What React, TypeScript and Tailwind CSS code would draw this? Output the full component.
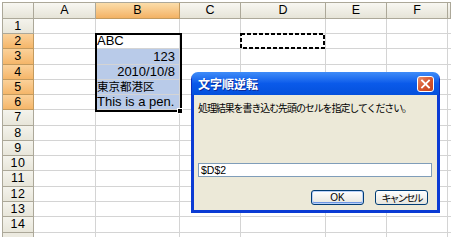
import React from "react";

const cols = ["", "A", "B", "C", "D", "E", "F", ""];
const rowCount = 16; // header + 14 rows + partial

const cellText: Record<string, { t: string; align: "l" | "r"; cjk?: boolean }> = {
  "2-2": { t: "ABC", align: "l" },
  "3-2": { t: "123", align: "r" },
  "4-2": { t: "2010/10/8", align: "r" },
  "5-2": { t: "東京都港区", align: "l", cjk: true },
  "6-2": { t: "This is a pen.", align: "l" },
};

function Cell({ r, c }: { r: number; c: number }) {
  if (r === 0) {
    if (c === 0) {
      return <div className="border-r border-b border-[#ACA899] bg-gradient-to-b from-[#F8F7F2] to-[#E6E4D8]" />;
    }
    if (c === 2) {
      return (
        <div className="flex items-center justify-center border-r border-b border-[#C39A5E] bg-gradient-to-b from-[#FBDDA9] to-[#F3B264] text-[12.5px] leading-none text-black">
          {cols[c]}
        </div>
      );
    }
    return (
      <div className="flex items-center justify-center border-r border-b border-[#ACA899] bg-gradient-to-b from-[#F8F7F2] to-[#E6E4D8] text-[12.5px] leading-none text-black">
        {cols[c]}
      </div>
    );
  }
  if (c === 0) {
    const sel = r >= 2 && r <= 6;
    if (r === 15) {
      return <div className="border-r border-[#ACA899] bg-[#ECEAE0]" />;
    }
    if (sel) {
      return (
        <div className="flex items-center justify-center border-r border-b border-[#C39A5E] bg-gradient-to-b from-[#FBD199] to-[#F5B669] text-[12.5px] leading-none tracking-[0.5px] text-black">
          {r}
        </div>
      );
    }
    return (
      <div className="flex items-center justify-center border-r border-b border-[#ACA899] bg-gradient-to-b from-[#F4F3EC] to-[#E8E6DA] text-[12.5px] leading-none tracking-[0.5px] text-black">
        {r}
      </div>
    );
  }
  if (c === 7) {
    return <div className={r === 15 ? "bg-white" : "border-b border-[#D4D4D4] bg-white"} />;
  }
  if (r === 15) {
    return <div className="border-r border-[#D4D4D4] bg-white" />;
  }
  const key = `${r}-${c}`;
  const data = cellText[key];
  const blue = c === 2 && r >= 3 && r <= 6;
  const base = blue
    ? "relative flex items-end border-r border-b border-[#D4D4D4] bg-[#B9CBE9]"
    : "relative flex items-end border-r border-b border-[#D4D4D4] bg-white";
  return (
    <div className={base}>
      {data && (
        <div
          className={
            data.align === "r"
              ? "w-full text-right pr-[4px] text-[13px] leading-[14px] text-black whitespace-nowrap"
              : data.cjk
              ? "w-full pl-[1px] text-[11.5px] leading-[14px] text-black whitespace-nowrap"
              : "w-full pl-[1px] text-[13px] leading-[14px] text-black whitespace-nowrap"
          }
        >
          {data.t}
        </div>
      )}
      {r === 2 && c === 4 && (
        <svg className="absolute left-[-1px] top-[-1px]" width="86" height="17">
          <rect x="1" y="1" width="83" height="14" fill="none" stroke="#000" strokeWidth="2" strokeDasharray="4 2" />
        </svg>
      )}
    </div>
  );
}

export default function App() {
  const cells: React.ReactNode[] = [];
  for (let r = 0; r < rowCount; r++) {
    for (let c = 0; c < 8; c++) {
      cells.push(<Cell key={`${r}-${c}`} r={r} c={c} />);
    }
  }
  return (
    <div
      className="relative w-[462px] h-[244px] bg-white overflow-hidden"
      style={{ fontFamily: '"Liberation Sans", "Noto Sans CJK JP", sans-serif' }}
    >
      <div className="pl-[2px] pt-[2px]">
        <div className="grid w-[449px] h-[235px] overflow-hidden border-l border-t border-[#ACA899] grid-cols-[31px_62px_84px_61px_85px_61px_61px_3px] grid-rows-[16px_15px_15px_16px_15px_15px_15px_16px_15px_15px_15px_16px_15px_15px_16px_4px]">
          {cells}
        </div>
      </div>

      {/* selection border */}
      <div className="absolute left-[95px] top-[33px] w-[87px] h-[79px] border-2 border-black pointer-events-none" />
      <div className="absolute left-[177px] top-[108px] w-[6px] h-[6px] bg-black border border-white" />

      {/* dialog */}
      <div
        className="absolute left-[191px] top-[72px] w-[249px] h-[141px] flex flex-col rounded-t-[7px] overflow-hidden"
        style={{ fontFamily: '"Noto Sans CJK JP", "Liberation Sans", sans-serif' }}
      >
        <div className="h-[23px] shrink-0 flex items-center pl-[6px] pr-[5px] bg-gradient-to-b from-[#3F8CF8] via-[#0A5AEA] to-[#0450DC] border-x border-[#0A2FC0]">
          <span className="text-[12px] font-bold text-white leading-none [text-shadow:1px_1px_0_#0B2A9A]">文字順逆転</span>
          <div className="ml-auto w-[17px] h-[16px] rounded-[3px] border border-white bg-gradient-to-br from-[#EB8E6A] via-[#D6562F] to-[#C1421D] flex items-center justify-center">
            <svg width="11" height="10" viewBox="0 0 11 10">
              <path d="M2 1.5 L9 8.5 M9 1.5 L2 8.5" stroke="#fff" strokeWidth="1.8" strokeLinecap="square" />
            </svg>
          </div>
        </div>
        <div className="flex-1 flex flex-col bg-[#ECE9D8] border-x-[3px] border-b-[3px] border-[#0B3BD4] px-[4px]">
          <div className="mt-[7px] h-[12px] text-[10px] leading-[12px] tracking-[-1.1px] text-black whitespace-nowrap">
            処理結果を書き込む先頭のセルを指定してください。
          </div>
          <div className="mt-[49px] h-[14px] w-[234px] bg-white border border-[#7F9DB9] flex items-center pl-[2px] text-[10.5px] leading-none text-black" style={{ fontFamily: '"Liberation Sans", sans-serif' }}>
            $D$2
          </div>
          <div className="mt-[13px] flex justify-end gap-[11px] pr-[5px]">
            <div className="w-[53px] h-[15px] rounded-[3px] border border-[#003C74] bg-gradient-to-b from-[#FFFFFF] to-[#E6E5DE] flex items-center justify-center shadow-[inset_0_0_0_1px_#B8D0F8,inset_0_-1px_0_1px_#6D96E4]">
              <span className="text-[10px] leading-none text-black" style={{ fontFamily: '"Liberation Sans", sans-serif' }}>OK</span>
            </div>
            <div className="w-[53px] h-[15px] rounded-[3px] border border-[#003C74] bg-gradient-to-b from-[#FFFFFF] to-[#E6E5DE] flex items-center justify-center">
              <span className="text-[10px] leading-none tracking-[-2px] text-black">キャンセル</span>
            </div>
          </div>
        </div>
      </div>
    </div>
  );
}
